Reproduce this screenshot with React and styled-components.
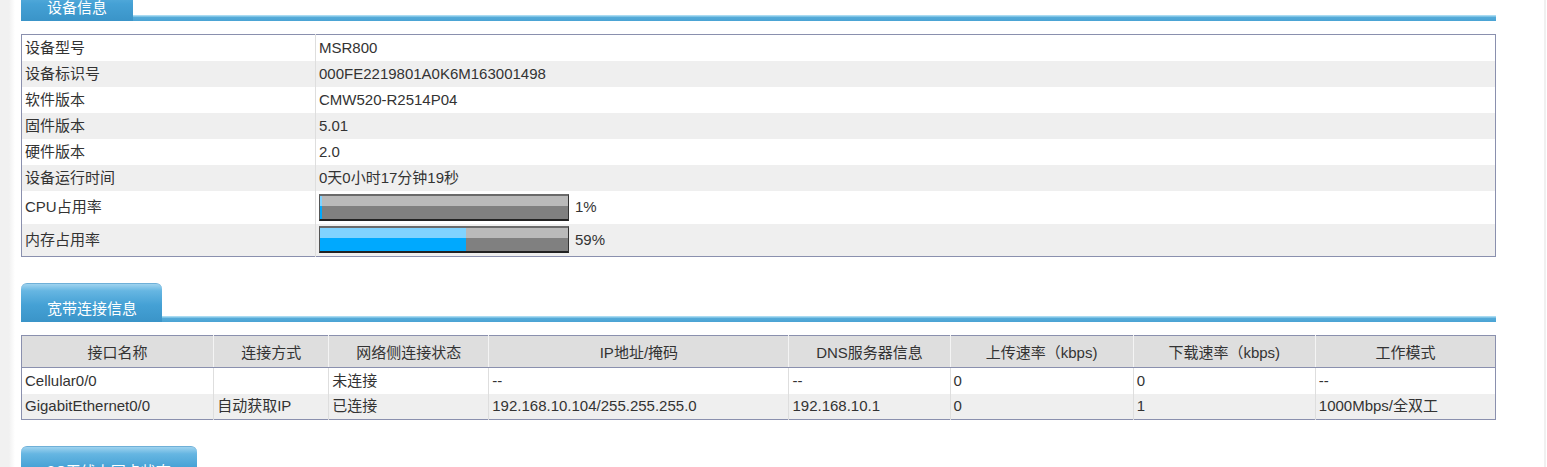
import React from "react";
import styled, { createGlobalStyle } from "styled-components";

const Global = createGlobalStyle`
  html, body { margin: 0; padding: 0; background: #fff; }
  body {
    font-family: "Liberation Sans", Arial, "Noto Sans CJK SC", sans-serif;
    font-size: 15px;
    color: #333;
    overflow: hidden;
  }
`;

const Page = styled.div`
  width: 1547px;
  height: 467px;
  overflow: hidden;
  display: flex;
  background: linear-gradient(to right, #f1f1f1 0, #f1f1f1 9px, #f8f8f8 12px, #fff 15px);
`;

const Main = styled.div`
  width: 1475px;
  margin: -18px 0 0 21px;
  display: flex;
  flex-direction: column;
`;

const RightEdge = styled.div`
  margin-left: auto;
  width: 2px;
  background: #f0f0f0;
  margin-right: 1px;
`;

const Section = styled.section`
  display: flex;
  flex-direction: column;
  margin-bottom: 26px;
`;

const Header = styled.div`
  display: flex;
  align-items: flex-end;
  height: 39px;
  margin-bottom: 13px;
`;

const Tab = styled.div`
  width: ${(p) => p.$w}px;
  height: 39px;
  box-sizing: border-box;
  padding: 15px 0 0 26px;
  border-radius: 6px 6px 0 0;
  border-top: 1px solid #6fb0d8;
  background: linear-gradient(to bottom, #9fd3ef 0, #66b6e2 18%, #45a1d5 55%, #3a94c8 100%);
  color: #fff;
  font-size: 15px;
  line-height: 18px;
  font-family: "Noto Sans CJK SC", "Liberation Sans", sans-serif;
  white-space: nowrap;
`;

const Line = styled.div`
  flex: 1;
  height: 6px;
  background: linear-gradient(to bottom, #a9dbf2 0, #a9dbf2 1px, #56acd9 2px, #4aa3d4 100%);
`;

const Table = styled.table`
  width: 1475px;
  border-collapse: collapse;
  border: 1px solid #8a90ae;
  table-layout: fixed;
  font-size: 15px;
`;

const Row = styled.tr`
  background: ${(p) => (p.$alt ? "#efefef" : "#fff")};
`;

const Cell = styled.td`
  height: ${(p) => p.$h || 26}px;
  padding: 0 3px;
  box-sizing: border-box;
  border-left: 1px solid #dedede;
  white-space: nowrap;
  overflow: hidden;
  vertical-align: middle;
  line-height: 18px;
  &:first-child { border-left: none; }
`;

const HeadCell = styled.th`
  height: 31px;
  padding: 0 3px;
  background: #dedede;
  border-left: 1px solid #f4f4f4;
  border-bottom: 1px solid #8a90ae;
  font-weight: normal;
  text-align: center;
  white-space: nowrap;
  color: #333;
  &:first-child { border-left: none; }
`;

const BarWrap = styled.div`
  display: flex;
  align-items: center;
  gap: 6px;
`;

const Bar = styled.div`
  width: 250px;
  height: 27px;
  box-sizing: border-box;
  border-top: 2px solid #6a6a6a;
  border-bottom: 2px solid #222;
  border-left: 1px solid #555;
  border-right: 1px solid #333;
  background: linear-gradient(to bottom, #bababa 0, #bababa 45%, #808080 45%, #808080 100%);
  display: flex;
`;

const Fill = styled.div`
  height: 100%;
  background: linear-gradient(to bottom, #80d3ff 0, #80d3ff 45%, #00a9fe 45%, #00a9fe 100%);
`;

const info = [
  ["设备型号", "MSR800"],
  ["设备标识号", "000FE2219801A0K6M163001498"],
  ["软件版本", "CMW520-R2514P04"],
  ["固件版本", "5.01"],
  ["硬件版本", "2.0"],
  ["设备运行时间", "0天0小时17分钟19秒"],
];

const usage = [
  ["CPU占用率", 1],
  ["内存占用率", 59],
];

const cols = [
  ["接口名称", 192],
  ["连接方式", 115],
  ["网络侧连接状态", 160],
  ["IP地址/掩码", 300],
  ["DNS服务器信息", 161],
  ["上传速率（kbps)", 183],
  ["下载速率（kbps)", 182],
  ["工作模式", 180],
];

const conns = [
  ["Cellular0/0", "", "未连接", "--", "--", "0", "0", "--"],
  ["GigabitEthernet0/0", "自动获取IP", "已连接", "192.168.10.104/255.255.255.0", "192.168.10.1", "0", "1", "1000Mbps/全双工"],
];

export default function App() {
  return (
    <>
      <Global />
      <Page>
        <Main>
          <Section>
            <Header>
              <Tab $w={112}>设备信息</Tab>
              <Line />
            </Header>
            <Table>
              <colgroup>
                <col style={{ width: 294 }} />
                <col />
              </colgroup>
              <tbody>
                {info.map(([k, v], i) => (
                  <Row key={k} $alt={i % 2 === 1}>
                    <Cell>{k}</Cell>
                    <Cell>{v}</Cell>
                  </Row>
                ))}
                {usage.map(([k, v], i) => (
                  <Row key={k} $alt={i % 2 === 1}>
                    <Cell $h={33}>{k}</Cell>
                    <Cell $h={33}>
                      <BarWrap>
                        <Bar>
                          <Fill style={{ width: `${v}%` }} />
                        </Bar>
                        <span>{v}%</span>
                      </BarWrap>
                    </Cell>
                  </Row>
                ))}
              </tbody>
            </Table>
          </Section>

          <Section>
            <Header>
              <Tab $w={141}>宽带连接信息</Tab>
              <Line />
            </Header>
            <Table>
              <colgroup>
                {cols.map(([n, w]) => (
                  <col key={n} style={{ width: w }} />
                ))}
              </colgroup>
              <thead>
                <tr>
                  {cols.map(([n]) => (
                    <HeadCell key={n}>{n}</HeadCell>
                  ))}
                </tr>
              </thead>
              <tbody>
                {conns.map((r, i) => (
                  <Row key={r[0]} $alt={i % 2 === 1}>
                    {r.map((c, j) => (
                      <Cell key={j}>{c}</Cell>
                    ))}
                  </Row>
                ))}
              </tbody>
            </Table>
          </Section>

          <Section>
            <Header>
              <Tab $w={176}>3G无线上网卡状态</Tab>
              <Line />
            </Header>
          </Section>
        </Main>
        <RightEdge />
      </Page>
    </>
  );
}
